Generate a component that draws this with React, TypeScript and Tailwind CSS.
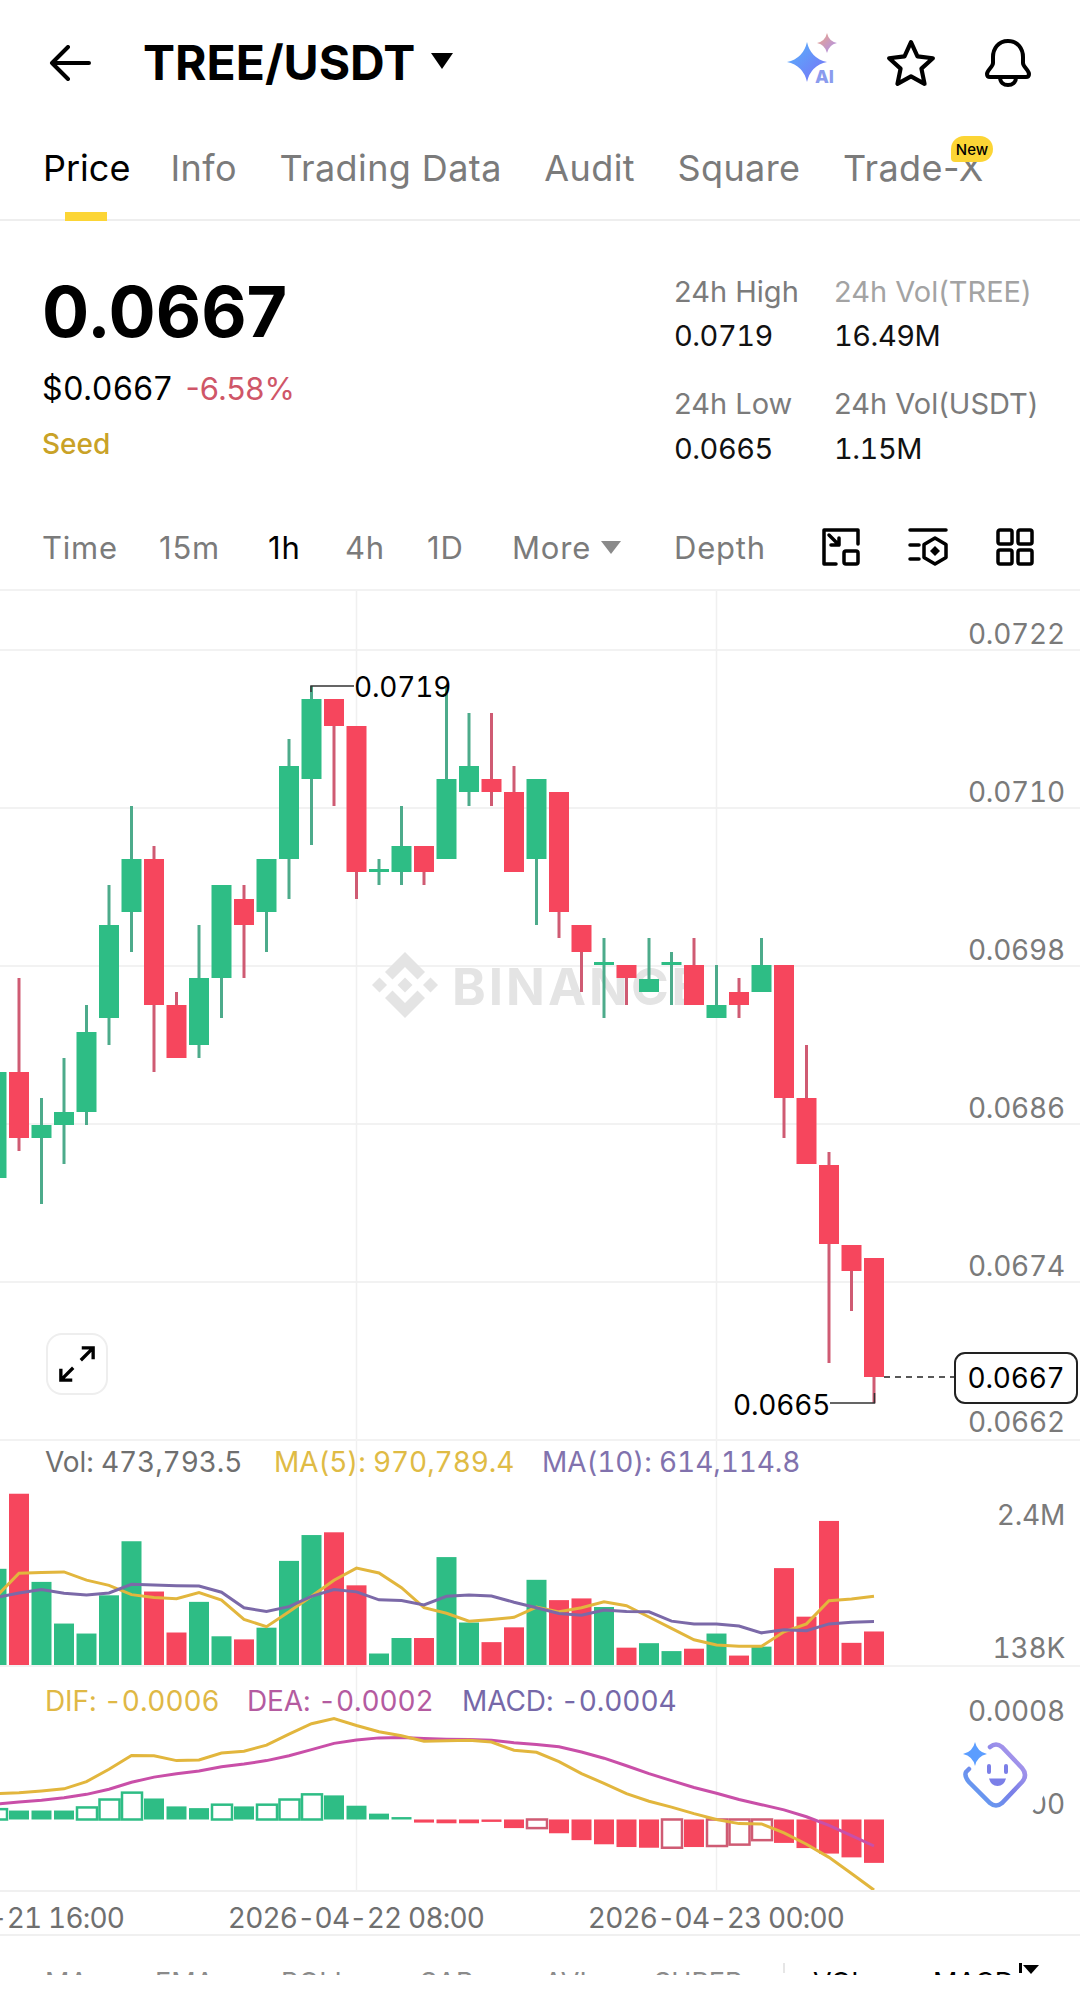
import { clsx } from "clsx";

const GREEN = "#2ebd85";
const RED = "#f6465d";
const GREEN_WICK = "#4dab8b";
const RED_WICK = "#cf5b73";

// candle x: one slot is 22.5px, slot 1 sits at x=19
const slotX = (i: number) => -3.5 + 22.5 * i;

// [high, bodyTop, bodyBottom, low, up]
const CANDLES: [number, number, number, number, boolean][] = [
  [1072, 1072, 1178, 1178, true],
  [978, 1072, 1138, 1151, false],
  [1098, 1125, 1138, 1204, true],
  [1058, 1112, 1125, 1164, true],
  [1005, 1032, 1112, 1125, true],
  [885, 925, 1018, 1045, true],
  [806, 859, 912, 952, true],
  [846, 859, 1005, 1072, false],
  [992, 1005, 1058, 1058, false],
  [925, 978, 1045, 1058, true],
  [885, 885, 978, 1018, true],
  [885, 899, 925, 978, false],
  [859, 859, 912, 952, true],
  [739, 766, 859, 899, true],
  [686, 699, 779, 845, true],
  [699, 699, 726, 806, false],
  [726, 726, 872, 899, false],
  [859, 869, 872, 885, true],
  [806, 846, 872, 885, true],
  [846, 846, 872, 885, false],
  [686, 779, 859, 859, true],
  [713, 766, 792, 806, true],
  [713, 779, 792, 806, false],
  [766, 792, 872, 872, false],
  [779, 779, 859, 925, true],
  [792, 792, 912, 938, false],
  [925, 925, 952, 992, false],
  [938, 962, 965, 1018, true],
  [965, 965, 978, 1005, false],
  [938, 979, 992, 992, true],
  [952, 962, 965, 1005, true],
  [938, 965, 1005, 1005, false],
  [965, 1005, 1018, 1018, true],
  [978, 992, 1005, 1018, false],
  [938, 965, 992, 992, true],
  [965, 965, 1098, 1138, false],
  [1045, 1098, 1164, 1164, false],
  [1152, 1165, 1244, 1363, false],
  [1245, 1245, 1271, 1311, false],
  [1258, 1258, 1377, 1403, false],
];

// Volume and MACD numbers were read off a crop: y = 1450 + v / 2.904
const cy = (v: number) => 1450 + v / 2.904;

const VOL_TOP = [
  345, 127, 383, 504, 533, 422, 265, 411, 530, 441, 541, 550, 516, 322, 247, 239, 393, 591, 546, 546, 311, 501, 558,
  515, 377, 436, 431, 456, 574, 561, 584, 577, 533, 597, 571, 343, 484, 206, 560, 527,
];
const MA5 = [
  425, 358, 356, 354, 378, 393, 420, 428, 432, 414, 436, 492, 513, 470, 425, 378, 343, 357, 400, 458, 474, 497, 492,
  486, 456, 470, 458, 441, 452, 485, 518, 551, 566, 570, 570, 528, 505, 438, 433, 425,
];
const MA10 = [
  428, 415, 405, 416, 421, 415, 390, 392, 394, 395, 413, 458, 469, 455, 425, 405, 412, 435, 437, 450, 425, 421, 424,
  442, 458, 475, 480, 465, 469, 470, 497, 505, 505, 511, 531, 522, 525, 505, 500, 498,
];
const DIF = [
  998, 995, 990, 984, 963, 927, 887, 888, 902, 900, 880, 875, 857, 825, 795, 780, 800, 818, 830, 846, 844, 843, 848,
  872, 878, 905, 940, 968, 998, 1020, 1037, 1056, 1073, 1085, 1086, 1112, 1145, 1183, 1230, 1278,
];
const DEA = [
  1028, 1022, 1017, 1010, 1000, 985, 965, 950, 940, 932, 920, 912, 902, 888, 870, 852, 842, 836, 835, 838, 840, 841,
  843, 850, 855, 862, 877, 895, 917, 940, 960, 980, 997, 1015, 1030, 1045, 1065, 1090, 1120, 1150,
];
const HIST_END = [
  1043, 1047, 1047, 1047, 1038, 1015, 995, 1012, 1035, 1040, 1030, 1035, 1030, 1015, 1000, 1003, 1033, 1056, 1066,
  1082, 1084, 1084, 1080, 1098, 1098, 1113, 1133, 1145, 1153, 1155, 1155, 1153, 1150, 1146, 1133, 1141, 1156, 1172,
  1183, 1199,
];
const HIST_HOLLOW = [0, 4, 5, 6, 10, 12, 13, 14, 24, 30, 32, 33, 34];

const linePoints = (vals: number[]) => vals.map((v, i) => `${slotX(i)},${cy(v)}`).join(" ");

function VerticalGrid({ from, to }: { from: number; to: number }) {
  return (
    <>
      <line x1={356.5} x2={356.5} y1={from} y2={to} stroke="#f0f0f0" strokeWidth={1.5} />
      <line x1={716.5} x2={716.5} y1={from} y2={to} stroke="#f0f0f0" strokeWidth={1.5} />
    </>
  );
}

function Star4({ cx, cy: y, r, fill }: { cx: number; cy: number; r: number; fill: string }) {
  return (
    <path
      d={`M${cx} ${y - r}Q${cx + r * 0.18} ${y - r * 0.18} ${cx + r} ${y}Q${cx + r * 0.18} ${y + r * 0.18} ${cx} ${y + r}Q${cx - r * 0.18} ${y + r * 0.18} ${cx - r} ${y}Q${cx - r * 0.18} ${y - r * 0.18} ${cx} ${y - r}Z`}
      fill={fill}
    />
  );
}

function Header() {
  return (
    <div className="flex h-[126px] items-center">
      <svg width="42" height="36" viewBox="0 0 42 36" className="ml-[49px]" fill="none" stroke="#000" strokeWidth="4" strokeLinecap="round" strokeLinejoin="round">
        <path d="M40 18H3M19 2 3 18l16 16" />
      </svg>
      <span className="ml-[52px] w-[287px] text-[48px] leading-none font-bold text-black">TREE/USDT</span>
      <svg width="24" height="16" viewBox="0 0 24 16" className="mb-[4px]">
        <path d="M1 0h22L12 16z" fill="#000" />
      </svg>
      <svg width="56" height="56" viewBox="0 0 56 56" className="mb-[4px] ml-[332px]">
        <defs>
          <linearGradient id="aiBig" x1="0" y1="0" x2="1" y2="1">
            <stop offset="0" stopColor="#55b4fb" />
            <stop offset="1" stopColor="#7a6ff6" />
          </linearGradient>
          <linearGradient id="aiSmall" x1="0" y1="0" x2="1" y2="1">
            <stop offset="0" stopColor="#f0a583" />
            <stop offset="1" stopColor="#a890f2" />
          </linearGradient>
        </defs>
        <Star4 cx={21} cy={29} r={20} fill="url(#aiBig)" />
        <Star4 cx={41} cy={10} r={10} fill="url(#aiSmall)" />
        <text x="29" y="50" fontFamily="Inter, sans-serif" fontWeight="800" fontSize="18" fill="#8a9bee">
          AI
        </text>
      </svg>
      <svg width="50" height="48" viewBox="0 0 24 23" className="ml-[44px]" fill="none" stroke="#000" strokeWidth="2" strokeLinejoin="round">
        <path d="m12 1.500 3.100 6.800 7.400.9-5.500 5 1.500 7.300L12 17.900l-6.500 3.600L7 14.200l-5.500-5 7.400-.9z" />
      </svg>
      <svg width="48" height="50" viewBox="0 0 48 50" className="ml-[48px]" fill="none" stroke="#000" strokeWidth="4" strokeLinecap="round" strokeLinejoin="round">
        <path d="M24 3C14 3 9 11 9 19v6c0 4-6 7-6 11 0 2 1 3 3 3h36c2 0 3-1 3-3 0-4-6-7-6-11v-6C39 11 34 3 24 3Z" />
        <path d="M16 39c0 6 4 8 8 8s8-2 8-8" />
      </svg>
    </div>
  );
}

function Tabs() {
  return (
    <div className="relative flex h-[95px] gap-[42.500px] border-b-2 border-[#eeeeee] pl-[43px] pt-[24px] text-[36px] leading-[36px] tracking-[0.4px] text-[#7b7b7b]">
      <span className="w-[85px] tracking-normal text-black">Price</span>
      <span>Info</span>
      <span>Trading Data</span>
      <span>Audit</span>
      <span>Square</span>
      <span>Trade-X</span>
      <div className="absolute bottom-[-2px] left-[65px] h-[9px] w-[42px] bg-[#fcd535]" />
      <div className="absolute left-[951px] top-[10px] flex h-[26px] w-[42px] items-center justify-center rounded-t-[13px] rounded-bl-[4px] rounded-br-[13px] bg-[#fcd535] text-[15px] leading-none font-medium tracking-normal text-black">
        New
      </div>
    </div>
  );
}

function PriceSummary() {
  return (
    <div className="flex h-[284px]">
      <div className="w-[674px] pl-[42px] pt-[55px]">
        <div className="text-[70px] leading-[72px] font-bold text-black">0.0667</div>
        <div className="mt-[23px] flex gap-[13px] text-[32px] leading-[36px] tracking-[0.6px]">
          <span className="text-black">$0.0667</span>
          <span className="text-[31px] tracking-normal text-[#cf5668]">-6.58%</span>
        </div>
        <div className="mt-[19px] text-[28px] leading-[36px] font-medium text-[#c9a227]">Seed</div>
      </div>
      <div className="grid h-fit grid-cols-[160px_1fr] pt-[53px] text-[29px] leading-[36px]">
        <span className="text-[#7b7b7b]">24h High</span>
        <span className="text-[#a3a3a3]">24h Vol(TREE)</span>
        <span className="mt-[8px] tracking-[-0.5px] text-[#111111] tabular-nums">0.0719</span>
        <span className="mt-[8px] tracking-[-0.5px] text-[#111111] tabular-nums">16.49M</span>
        <span className="mt-[32px] text-[#7b7b7b]">24h Low</span>
        <span className="mt-[32px] text-[#7b7b7b]">24h Vol(USDT)</span>
        <span className="mt-[9px] tracking-[-0.5px] text-[#111111] tabular-nums">0.0665</span>
        <span className="mt-[9px] tracking-[-0.5px] text-[#111111] tabular-nums">1.15M</span>
      </div>
    </div>
  );
}

function IntervalBar() {
  return (
    <div className="flex h-[84px] items-center pl-[42px] text-[31px] leading-none tracking-[0.8px] text-[#7b7b7b]">
      <span className="w-[117px]">Time</span>
      <span className="w-[109px]">15m</span>
      <span className="w-[77px] text-black">1h</span>
      <span className="w-[82px]">4h</span>
      <span className="w-[85px]">1D</span>
      <span className="flex w-[162px] items-center gap-[10px]">
        More
        <svg width="20" height="13" viewBox="0 0 20 13">
          <path d="M0 0h20L10 13z" fill="#8a8a8a" />
        </svg>
      </span>
      <span className="w-[148px]">Depth</span>
      <svg width="38" height="38" viewBox="0 0 38 38" className="mr-[48px]" fill="none" stroke="#000" strokeWidth="3.5" strokeLinejoin="round" strokeLinecap="round">
        <path d="M14 36H2V2h34v14" />
        <rect x="22" y="23" width="14" height="13" rx="2" />
        <path d="m7 7 10 10M17 10v7H9" />
      </svg>
      <svg width="40" height="38" viewBox="0 0 40 38" className="mr-[48px]" fill="none" stroke="#000" strokeWidth="3.5" strokeLinejoin="round" strokeLinecap="round">
        <path d="M2 2h36M2 17h9M2 31h9" />
        <path d="m27 10 11 6.500v13L27 36l-11-6.500v-13z" />
        <path d="m27 18 5 5-5 5-5-5z" fill="#000" stroke="none" />
      </svg>
      <svg width="38" height="38" viewBox="0 0 38 38" fill="none" stroke="#000" strokeWidth="3.5" strokeLinejoin="round">
        <rect x="2" y="2" width="14" height="14" rx="2" />
        <rect x="22" y="2" width="14" height="14" rx="2" />
        <rect x="2" y="22" width="14" height="14" rx="2" />
        <rect x="22" y="22" width="14" height="14" rx="2" />
      </svg>
    </div>
  );
}

function BinanceMark() {
  const cx = 405;
  const c = 985;
  return (
    <g transform={`translate(${cx} ${c})`} fill="#e4e4e4">
      <path d="M0-33 20-13l-7.500 7.500L0-18-12.500-5.500-20-13z" />
      <path d="M0 33 20 13l-7.500-7.500L0 18-12.500 5.500-20 13z" />
      <path d="m-33 0 7.500-7.500L-18 0l-7.500 7.500z" />
      <path d="m33 0-7.500-7.500L18 0l7.500 7.500z" />
      <path d="m0-7.500 7.500 7.500L0 7.500-7.500 0z" />
    </g>
  );
}

function PriceLabel({ className, children }: { className: string; children: string }) {
  return (
    <div className={clsx("absolute right-[15px] text-[28px] leading-[28px] tracking-[-0.2px] text-[#7a7a7a] tabular-nums", className)}>
      {children}
    </div>
  );
}

function CandlePanel() {
  return (
    <div className="relative h-[850px] border-t-2 border-[#f2f2f2]">
      <svg width="1080" height="848" viewBox="0 591 1080 848" className="block">
        {[650, 808, 966, 1124, 1282].map((y) => (
          <line key={y} x1={0} x2={1080} y1={y} y2={y} stroke="#f2f2f2" strokeWidth={2} />
        ))}
        <VerticalGrid from={591} to={1439} />
        <BinanceMark />
        <text x="452" y="1005" fontFamily="Inter, sans-serif" fontWeight="700" fontSize="51" letterSpacing="3" fill="#e4e4e4">
          BINANCE
        </text>
        {CANDLES.map(([high, top, bottom, low, up], i) => {
          const x = slotX(i);
          return (
            <g key={i}>
              <line x1={x} x2={x} y1={high} y2={low} stroke={up ? GREEN_WICK : RED_WICK} strokeWidth={3} />
              <rect x={x - 10} y={top} width={20} height={bottom - top} fill={up ? GREEN : RED} />
            </g>
          );
        })}
        <path d="M311 692v-6h43" fill="none" stroke="#333" strokeWidth={1.5} />
        <path d="M830 1403h44.500v-10" fill="none" stroke="#333" strokeWidth={1.5} />
        <line x1={884} x2={955} y1={1377} y2={1377} stroke="#222" strokeWidth={1.5} strokeDasharray="6 5" />
      </svg>

      <PriceLabel className="top-[29px]">0.0722</PriceLabel>
      <PriceLabel className="top-[187px]">0.0710</PriceLabel>
      <PriceLabel className="top-[345px]">0.0698</PriceLabel>
      <PriceLabel className="top-[503px]">0.0686</PriceLabel>
      <PriceLabel className="top-[661px]">0.0674</PriceLabel>
      <PriceLabel className="top-[817px]">0.0662</PriceLabel>

      <div className="absolute left-[354px] top-[82px] text-[28px] leading-[28px] tracking-[-0.2px] text-black tabular-nums">0.0719</div>
      <div className="absolute left-[733px] top-[800px] text-[28px] leading-[28px] tracking-[-0.2px] text-black tabular-nums">0.0665</div>
      <div className="absolute right-[2px] top-[761px] flex h-[52px] w-[124px] items-center justify-center rounded-[11px] border-2 border-[#222222] bg-white text-[28px] leading-none tracking-[-0.2px] text-black tabular-nums">
        0.0667
      </div>

      <div className="absolute left-[46px] top-[742px] flex h-[62px] w-[62px] items-center justify-center rounded-[16px] border-2 border-[#eeeeee] bg-white">
        <svg width="38" height="38" viewBox="0 0 40 40" fill="none" stroke="#000" strokeWidth="3.5">
          <path d="m24 16 13-13M25 3h12v12M16 24 3 37M3 25v12h12" />
        </svg>
      </div>
    </div>
  );
}

function VolumePanel() {
  const base = cy(625);
  return (
    <div className="relative h-[226px] border-t-2 border-[#f2f2f2]">
      <svg width="1080" height="224" viewBox="0 1441 1080 224" className="block">
        <VerticalGrid from={1441} to={1665} />
        {VOL_TOP.map((t, i) => (
          <rect key={i} x={slotX(i) - 10} y={cy(t)} width={20} height={base - cy(t)} fill={CANDLES[i][4] ? GREEN : RED} />
        ))}
        <polyline points={linePoints(MA5)} fill="none" stroke="#e2b63d" strokeWidth={3} />
        <polyline points={linePoints(MA10)} fill="none" stroke="#7b69a8" strokeWidth={3} />
      </svg>
      <div className="absolute left-[45px] top-[7px] flex text-[28px] leading-[28px] tracking-[-0.1px] tabular-nums">
        <span className="w-[229px] text-[#6f6f6f]">Vol: 473,793.5</span>
        <span className="w-[268px] text-[#dfbb45]">MA(5): 970,789.4</span>
        <span className="text-[#8172ad]">MA(10): 614,114.8</span>
      </div>
      <PriceLabel className="top-[60px]">2.4M</PriceLabel>
      <PriceLabel className="top-[193px]">138K</PriceLabel>
    </div>
  );
}

function MacdPanel() {
  const zero = cy(1073);
  return (
    <div className="relative h-[225px] border-t-2 border-[#f2f2f2]">
      <svg width="1080" height="223" viewBox="0 1667 1080 223" className="block">
        <VerticalGrid from={1667} to={1890} />
        {HIST_END.map((e, i) => {
          const up = e < 1073;
          const y = Math.min(cy(e), zero);
          const h = Math.abs(cy(e) - zero);
          return HIST_HOLLOW.includes(i) ? (
            <rect key={i} x={slotX(i) - 9.5} y={y} width={20} height={h} fill="#fff" stroke={up ? GREEN : RED_WICK} strokeWidth={2.5} />
          ) : (
            <rect key={i} x={slotX(i) - 10} y={y} width={20} height={h} fill={up ? GREEN : RED} />
          );
        })}
        <polyline points={linePoints(DEA)} fill="none" stroke="#c94fa8" strokeWidth={3} />
        <polyline points={linePoints(DIF)} fill="none" stroke="#e2b63d" strokeWidth={3} />
      </svg>
      <div className="absolute left-[45px] top-[20px] flex text-[28px] leading-[28px] tracking-[-0.1px] tabular-nums">
        <span className="w-[202px] text-[#dfb845]">DIF: -0.0006</span>
        <span className="w-[215px] text-[#b45ba0]">DEA: -0.0002</span>
        <span className="text-[#7668a8]">MACD: -0.0004</span>
      </div>
      <PriceLabel className="top-[30px]">0.0008</PriceLabel>
      <PriceLabel className="top-[123px]">0.0000</PriceLabel>

      <svg width="130" height="100" viewBox="0 0 130 100" className="absolute left-[950px] top-[63px]">
        <defs>
          <linearGradient id="botLine" x1="0" y1="1" x2="1" y2="0">
            <stop offset="0" stopColor="#5aa8f5" />
            <stop offset="0.5" stopColor="#7a7fe8" />
            <stop offset="1" stopColor="#bca0ec" />
          </linearGradient>
        </defs>
        <circle cx="48" cy="45" r="50" fill="#fff" />
        <path
          d="M40 17q6-5 12 0l20 21q6 7 0 14L52 73q-6 5-12 0L19 52q-5-6-3-10l3-3"
          fill="none"
          stroke="url(#botLine)"
          strokeWidth="4.5"
          strokeLinecap="round"
        />
        <Star4 cx={25} cy={24} r={12} fill="#5b9dff" />
        <rect x="37" y="34" width="4" height="10" rx="2" fill="#7b7fe8" />
        <rect x="54" y="34" width="4" height="10" rx="2" fill="#7b7fe8" />
        <path d="M39 48.500h17q-2 7.500-8.500 7.500T39 48.500Z" fill="#7b7fe8" />
      </svg>
    </div>
  );
}

function TimeAxis() {
  return (
    <div className="relative h-[46px] overflow-hidden border-y-2 border-[#f0f0f0] text-[28px] leading-[28px] tracking-[-0.8px] whitespace-nowrap text-[#6f6f6f] tabular-nums">
      <span className="absolute left-[-144px] top-[12px] w-[280px] text-center">2026-04-21 16:00</span>
      <span className="absolute left-[216px] top-[12px] w-[280px] text-center">2026-04-22 08:00</span>
      <span className="absolute left-[576px] top-[12px] w-[280px] text-center">2026-04-23 00:00</span>
    </div>
  );
}

// only the top few pixels of this row are on screen, the rest is cut off
function IndicatorRow() {
  return (
    <div className="flex h-[39px] overflow-hidden pl-[45px] pt-[33px] text-[27px] leading-[28px] text-[#8a8a8a]">
      <span className="w-[110px]">MA</span>
      <span className="w-[126px]">EMA</span>
      <span className="w-[139px]">BOLL</span>
      <span className="w-[124px]">SAR</span>
      <span className="w-[110px]">AVL</span>
      <span className="w-[129px]">SUPER</span>
      <div className="mt-[-6px] h-[10px] w-[30px] border-l-2 border-[#e6e6e6]" />
      <span className="w-[120px] text-black">VOL</span>
      <span className="w-[86px] text-black">MACD</span>
      <div className="mt-[-6px] h-[10px] w-[4px] border-l-[3px] border-black" />
      <svg width="16" height="9" viewBox="0 0 16 9" className="mt-[-4px]">
        <path d="M0 0h16L8 9z" fill="#000" />
      </svg>
    </div>
  );
}

export default function App() {
  return (
    <div className="h-[1989px] w-[1080px] overflow-hidden bg-white font-['Inter',sans-serif]">
      <Header />
      <Tabs />
      <PriceSummary />
      <IntervalBar />
      <CandlePanel />
      <VolumePanel />
      <MacdPanel />
      <TimeAxis />
      <IndicatorRow />
    </div>
  );
}
